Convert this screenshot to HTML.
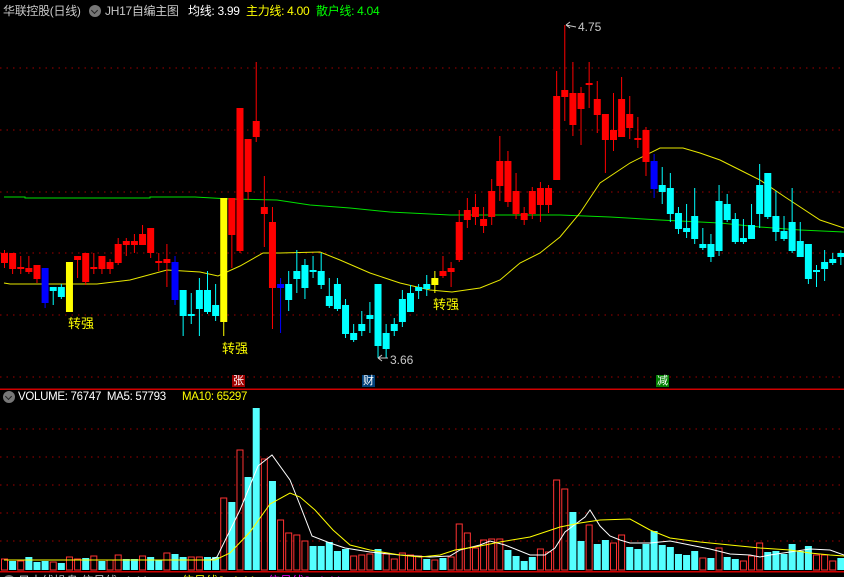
<!DOCTYPE html>
<html><head><meta charset="utf-8"><style>
html,body{margin:0;padding:0;background:#000;width:844px;height:577px;overflow:hidden}
body{position:relative;font-family:"Liberation Sans","Noto Sans CJK SC",sans-serif}
.t{position:absolute;font-size:12px;white-space:nowrap;line-height:14px}
.h{letter-spacing:-0.3px}
.ic{position:absolute;width:12px;height:12px;border-radius:50%;background:#777}
.ic:after{content:"";position:absolute;left:3px;top:3px;width:4px;height:4px;border-right:1.5px solid #222;border-bottom:1.5px solid #222;transform:rotate(45deg)}
svg{position:absolute;left:0;top:0}
.mk{position:absolute;font-size:11px;line-height:12px;color:#fff;text-align:center;width:13px;height:12px}
</style></head><body>
<svg id="s" width="844" height="577" xmlns="http://www.w3.org/2000/svg"></svg>
<div class="t h" style="left:3px;top:4px;color:#c8c8c8">华联控股(日线)</div>
<div class="ic" style="left:89px;top:5px"></div>
<div class="t h" style="left:105px;top:4px;color:#c8c8c8">JH17自编主图</div>
<div class="t h" style="left:188px;top:4px;color:#fff">均线: 3.99</div>
<div class="t h" style="left:246px;top:4px;color:#ffff00">主力线: 4.00</div>
<div class="t h" style="left:316px;top:4px;color:#00ff00">散户线: 4.04</div>
<div class="t" style="left:68px;top:317px;color:#ffff00;font-size:13px">转强</div>
<div class="t" style="left:222px;top:342px;color:#ffff00;font-size:13px">转强</div>
<div class="t" style="left:433px;top:298px;color:#ffff00;font-size:13px">转强</div>
<div class="t" style="left:578px;top:20px;color:#c8c8c8;font-size:12px">4.75</div>
<div class="t" style="left:390px;top:353px;color:#c8c8c8;font-size:12px">3.66</div>
<div class="mk" style="left:232px;top:375px;background:#a00000">张</div>
<div class="mk" style="left:362px;top:375px;background:#00407a">财</div>
<div class="mk" style="left:656px;top:375px;background:#008000">减</div>
<div class="ic" style="left:3px;top:391px"></div>
<div class="t h" style="left:18px;top:390px;color:#fff;font-size:11.5px">VOLUME: 76747&nbsp; MA5: 57793</div>
<div class="t h" style="left:182px;top:390px;color:#ffff00;font-size:11.5px">MA10: 65297</div>
<div class="ic" style="left:3px;top:575px"></div>
<div class="t" style="left:18px;top:574px;color:#c8c8c8;font-size:12px">日中线操盘 信号线: 4.44</div>
<div class="t" style="left:182px;top:574px;color:#ffff00;font-size:12px">信号线2: 4.44</div>
<div class="t" style="left:268px;top:574px;color:#ff00ff;font-size:12px">信号线3: 4.44</div>
<script>
var C=[
['r',253,263,250,268],['r',253,269,253,274],['r',267,269,256,274],['r',268,272,256,274],['r',265,279,265,283],
['b',268,303,268,308],['c',287,291,287,305],['c',287,297,284,299],['y',262,312,262,312],['r',256,260,256,278],
['r',253,282,253,285],['r',267,269,253,274],['r',256,269,256,274],['r',262,269,259,274],['r',244,263,238,265],
['r',241,245,238,256],['r',241,245,234,253],['r',234,245,225,245],['r',228,253,228,258],['r',261,263,253,271],
['r',259,263,244,287],['b',262,300,256,305],['c',290,316,290,336],['c',314,316,293,324],['c',290,309,278,336],
['c',290,312,271,314],['c',305,316,284,321],['y',198,322,198,336],['r',198,235,198,268],['r',108,251,108,253],
['r',139,192,139,200],['r',121,137,62,142],['r',207,214,176,247],['r',222,288,207,329],['b',284,288,278,333],
['c',284,300,271,311],['c',271,279,250,293],['c',265,288,259,299],['c',270,272,256,278],['c',271,285,253,289],
['c',296,306,278,308],['c',284,309,278,311],['c',305,334,299,338],['c',333,340,324,342],['c',324,331,311,336],
['c',315,319,302,333],['c',284,346,284,358],['c',333,349,324,358],['c',324,331,318,336],['c',299,322,290,327],
['c',293,312,285,312],['c',287,291,284,299],['c',284,289,275,296],['y',278,285,271,293],['r',271,276,256,278],
['r',268,272,262,287],['r',222,260,210,262],['r',210,220,198,228],['r',207,217,194,225],['r',219,226,207,233],
['r',191,217,179,225],['r',161,186,136,201],['r',161,202,151,207],['r',191,214,173,219],['r',213,220,207,225],
['r',191,214,187,219],['r',188,205,182,222],['r',188,205,185,213],['r',96,180,71,180],['r',90,97,25,121],
['r',93,125,62,136],['r',93,109,87,145],['r',83,85,62,108],['r',99,115,81,133],['r',114,140,114,173],
['r',130,140,93,151],['r',99,137,77,137],['r',114,128,96,139],['r',138,140,117,148],['r',130,162,127,176],
['b',161,189,154,198],['c',185,192,167,204],['c',188,214,173,222],['c',213,229,207,234],['c',228,232,204,238],
['c',216,239,188,244],['c',244,248,228,250],['c',244,257,234,262],['c',201,251,185,256],['c',204,220,194,222],
['c',219,242,213,244],['c',238,242,219,244],['c',225,239,204,239],['c',185,214,164,228],['c',173,217,173,219],
['c',216,232,191,241],['c',231,239,216,241],['c',222,251,188,253],['c',241,257,222,257],['c',244,279,244,284],
['c',270,272,265,287],['c',262,269,250,281],['c',259,263,253,265],['c',253,257,250,265]];
var V=[559,'c561',561,'c557','c562','c561',562,'c563',557,559,'c558',556,'c561',560,555,'c559','c559',556,'c557','c560',
553,'c554','c557',557,557,'c557','c557',498,'c502',450,'c477','c408',459,'c481',520,533,535,541,'c546','c546',
'c542','c551','c549',556,555,554,'c549',554,559,553,555,556,'c559',560,'c558',557,524,533,548,540,
539,539,'c550','c556','c561','c557',549,552,480,489,'c512','c541',525,'c544','c540',543,535,'c547','c549','c544',
'c531','c545','c547','c554','c555','c551',558,'c558',548,'c557','c559',561,556,543,'c552','c551','c554','c544',
'c551','c546',555,555,561,'c558'];
var col={r:'#ff0000',c:'#00ffff',b:'#0000ff',y:'#ffff00'};
var h='';
function dl(y){h+='<line x1="0" y1="'+y+'" x2="844" y2="'+y+'" stroke="#a00000" stroke-width="1" stroke-dasharray="1.5,5"/>';}
[68,130,192,253,315,377].forEach(dl);[429,457,485,513,541].forEach(dl);
h+='<rect x="0" y="388.5" width="844" height="1.5" fill="#d00000"/>';
h+='<rect x="0" y="571" width="844" height="1.5" fill="#d00000"/>';
function X(i){return 4.5+8.12*i;}
function pl(p,c){h+='<polyline fill="none" stroke="'+c+'" stroke-width="1" points="'+p.map(function(a){return a[0]+','+a[1]}).join(' ')+'"/>';}
pl([[4,197],[25,197],[25,198],[150,198],[150,197],[195,197],[230,199],[277,200],[310,205],[350,208],[390,212],[430,214],[450,215],[560,215],[610,217],[660,220],[720,223],[760,227],[800,230],[844,232]],'#00e000');
pl([[4,283],[10,284],[97,284],[130,280],[167,270],[200,272],[218,276],[240,266],[263,253],[280,253],[320,252],[340,260],[370,273],[400,283],[430,290],[452,292],[480,288],[500,280],[520,263],[540,253],[560,237],[580,213],[600,183],[630,163],[660,148],[683,148],[700,153],[720,160],[740,170],[760,180],[785,197],[820,220],[844,228]],'#e8e800');
for(var i=0;i<V.length;i++){var v=V[i],cy=typeof v=='string',t=cy?+v.slice(1):v,x=X(i);
 if(cy)h+='<rect x="'+(x-3.5)+'" y="'+t+'" width="7" height="'+(570-t)+'" fill="#54ffff"/>';
 else h+='<rect x="'+(x-3)+'" y="'+t+'" width="6" height="'+(570-t)+'" fill="none" stroke="#ff3232" stroke-width="1"/>';}
pl([[4,560],[210,560],[217,557],[240,510],[258,466],[272,455],[290,480],[300,505],[312,536],[330,543],[345,548],[370,552],[400,555],[430,557],[450,556],[460,550],[480,545],[490,541],[505,545],[530,555],[545,555],[555,548],[565,532],[585,517],[590,510],[600,526],[610,536],[620,540],[630,543],[650,543],[670,541],[690,545],[710,549],[730,554],[750,555],[760,557],[770,555],[790,552],[810,549],[830,550],[844,555]],'#ffffff');
pl([[4,560],[215,560],[230,553],[250,532],[270,504],[290,493],[300,497],[315,510],[333,530],[350,545],[370,550],[400,555],[420,557],[440,555],[455,550],[475,547],[500,542],[530,537],[560,527],[580,523],[600,520],[630,519],[650,530],[670,538],[700,542],[730,545],[760,548],[790,550],[810,553],[830,555],[844,556]],'#ffff00');
for(var i=0;i<C.length;i++){var d=C[i],x=X(i),c=col[d[0]];
 h+='<rect x="'+(x-0.5)+'" y="'+d[3]+'" width="1" height="'+(d[4]-d[3])+'" fill="'+c+'"/>';
 var bh=Math.max(1,d[2]-d[1]);
 h+='<rect x="'+(x-3.5)+'" y="'+d[1]+'" width="7" height="'+bh+'" fill="'+c+'"/>';}
h+='<path d="M566,25 L570,22 M566,25 L570,28 M566,25 L576,27" stroke="#c8c8c8" fill="none"/>';
h+='<path d="M378,358 L382,355 M378,358 L382,361 M378,358 L388,358" stroke="#c8c8c8" fill="none"/>';
document.getElementById('s').innerHTML=h;
</script>
</body></html>
